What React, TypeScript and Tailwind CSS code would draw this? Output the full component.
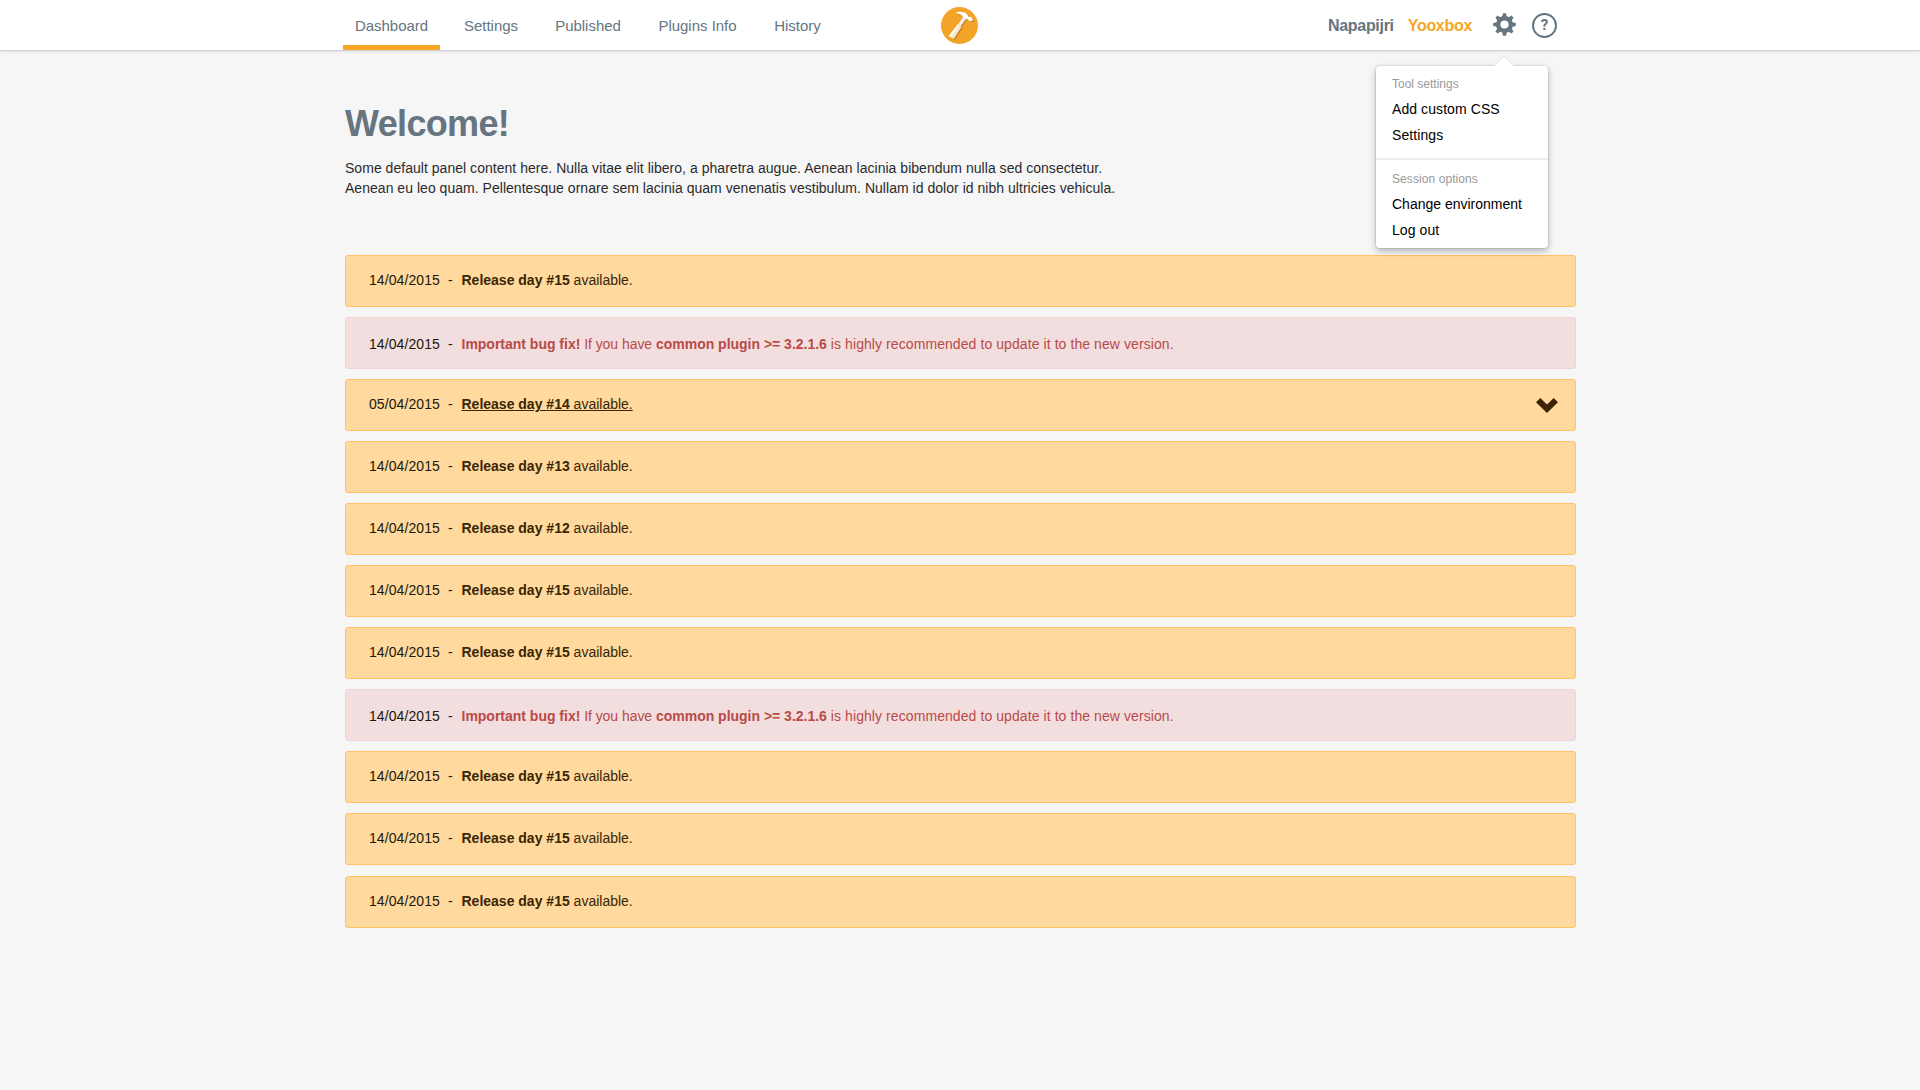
const tabs = [
  { label: 'Dashboard', width: 'w-[97px]' },
  { label: 'Settings', width: 'w-[78px]' },
  { label: 'Published', width: 'w-[92px]' },
  { label: 'Plugins Info', width: 'w-[103px]' },
  { label: 'History', width: 'w-[73px]' },
];

type Notice = { date: string; release?: number; open?: boolean };

const notices: Notice[] = [
  { date: '14/04/2015', release: 15 },
  { date: '14/04/2015' },
  { date: '05/04/2015', release: 14, open: true },
  { date: '14/04/2015', release: 13 },
  { date: '14/04/2015', release: 12 },
  { date: '14/04/2015', release: 15 },
  { date: '14/04/2015', release: 15 },
  { date: '14/04/2015' },
  { date: '14/04/2015', release: 15 },
  { date: '14/04/2015', release: 15 },
  { date: '14/04/2015', release: 15 },
];

function Logo() {
  return (
    <svg width="37" height="37" viewBox="0 0 37 37" aria-hidden="true">
      <circle cx="18.5" cy="18.5" r="18.5" fill="#f3a328" />
      <g transform="translate(1 1)" fill="#8f5c10" opacity="0.5">
        <path d="M22.4 9.5 25.4 11.5 19.5 19.3 17 17.6z" />
        <path d="M16.8 17.2 20.6 19.8 12.6 32.2 7.8 29z" />
        <path d="M14.4 6.2C18 4.2 23 4.2 26 7.2L28 10.2 29.8 9.4 32.2 13 29 14.6 27 12.4 22.6 10.8C21 7.6 18.4 6.4 14.4 6.2Z" />
      </g>
      <path d="M22.4 9.5 25.4 11.5 19.5 19.3 17 17.6z" fill="#f6f2ea" />
      <path d="M14.4 6.2C18 4.2 23 4.2 26 7.2L28 10.2 29.8 9.4 32.2 13 29 14.6 27 12.4 22.6 10.8C21 7.6 18.4 6.4 14.4 6.2Z" fill="#ffffff" />
      <path d="M16.8 17.2 20.6 19.8 12.6 32.2 7.8 29z" fill="#f6e6cb" />
      <path d="M16.8 17.2 18.2 18.2 9.6 30.2 7.8 29z" fill="#fffaf0" />
    </svg>
  );
}

function Gear() {
  return (
    <svg width="23" height="23" viewBox="-11.5 -11.5 23 23" fill="#667580" aria-hidden="true">
      <path
        fillRule="evenodd"
        d="M0-8.5A8.5 8.5 0 0 1 0 8.5 8.5 8.5 0 0 1 0-8.5ZM0-4.1A4.1 4.1 0 0 0 0 4.1 4.1 4.1 0 0 0 0-4.1Z"
      />
      {[0, 45, 90, 135, 180, 225, 270, 315].map((angle) => (
        <path key={angle} d="M-2.3-7.4-1.5-11.3H1.5L2.3-7.4Z" transform={`rotate(${angle})`} />
      ))}
    </svg>
  );
}

function Header() {
  return (
    <header className="relative flex h-[51px] border-b border-[#d3d3d3] bg-white pl-[343px] shadow-[0_1px_2px_rgba(0,0,0,0.1)]">
      <nav className="flex h-[50px] gap-3 text-[15px] text-[#667580]">
        {tabs.map((tab, i) => (
          <a
            key={tab.label}
            className={`flex justify-center border-b-[5px] pt-[15px] leading-[22px] tracking-[-0.02px] whitespace-nowrap ${tab.width} ${i === 0 ? 'border-[#f6a623]' : 'border-transparent'}`}
          >
            {tab.label}
          </a>
        ))}
      </nav>
      <div className="ml-[107px] pt-[7px]">
        <Logo />
      </div>
      <div className="ml-auto flex h-[50px] pr-[363px] text-[16px] leading-[22px] font-bold">
        <span className="mr-[14px] pt-[15px] tracking-[-0.3px] text-[#667580]">Napapijri</span>
        <span className="mr-[21px] pt-[15px] tracking-[-0.3px] text-[#f6a623]">Yooxbox</span>
        <span className="mr-[16px] pt-[13px]">
          <Gear />
        </span>
        <span className="mt-[13px] flex size-[25px] items-center justify-center rounded-full border-2 border-[#667580] pb-px font-['Roboto',sans-serif] text-[15px] text-[#667580]">
          ?
        </span>
      </div>
      <SettingsMenu />
    </header>
  );
}

function SettingsMenu() {
  return (
    <div className="absolute top-[66px] left-[1376px] z-10 h-[182px] w-[172px] rounded-[4px] bg-white text-[14px] leading-[26px] text-black shadow-[0_0_0_1px_rgba(0,0,0,0.07),0_3px_7px_rgba(0,0,0,0.28)]">
      <svg className="absolute -top-[11px] left-[117px]" width="22" height="12" viewBox="0 0 22 12" aria-hidden="true">
        <path d="M0 12 11 .8 22 12Z" fill="#ffffff" />
        <path d="M1 10.5 11 .5 21 10.5" fill="none" stroke="#dedede" strokeWidth="1" />
      </svg>
      <div className="flex h-[92px] flex-col px-4 pt-[6px]">
        <span className="mb-[-1px] text-[12px] leading-[25px] text-[#999999]">Tool settings</span>
        <span className="tracking-[0.08px]">Add custom CSS</span>
        <span className="tracking-[0.08px]">Settings</span>
      </div>
      <div className="flex flex-col border-t-2 border-[#ececec] px-4 pt-[7px]">
        <span className="mb-[-1px] text-[12px] leading-[25px] tracking-[0.08px] text-[#999999]">Session options</span>
        <span>Change environment</span>
        <span className="tracking-[0.08px]">Log out</span>
      </div>
    </div>
  );
}

function NoticeRow({ notice, last }: { notice: Notice; last: boolean }) {
  const bug = notice.release === undefined;
  return (
    <li
      className={`flex h-[52px] rounded-[3px] border pl-[23px] leading-[20px] ${last ? 'mt-[11px]' : 'mt-[10px]'} ${
        bug ? 'border-[#eed3d7] bg-[#f2dede] pt-[16px] text-[#b94a48]' : 'border-[#fdc466] bg-[#ffd99e] pt-[14px] text-[#3b2504]'
      }`}
    >
      <span className="w-[79px] tracking-[0.08px] text-[#201808]">{notice.date}</span>
      <span className="w-[13.5px] text-[#201808]">-</span>
      {bug ? (
        <p>
          <b className="tracking-[-0.01px]">Important bug fix!</b>
          <span className="tracking-[-0.05px]"> If you have </span>
          <b className="tracking-[-0.01px]">common plugin &gt;= 3.2.1.6</b>
          <span className="tracking-[0.08px]"> is highly recommended to update it to the new version.</span>
        </p>
      ) : (
        <p className={notice.open ? 'underline' : ''}>
          <b>Release day #{notice.release}</b> available.
        </p>
      )}
      {notice.open && (
        <svg className="mt-[4px] mr-[17px] ml-auto" width="22" height="15" viewBox="0 0 22 15" aria-hidden="true">
          <path d="M0 4.3 4.3 0 11 6.6 17.7 0 22 4.3 11 15Z" fill="#3b2504" />
        </svg>
      )}
    </li>
  );
}

export default function App() {
  return (
    <div className="h-[1090px] w-[1920px] overflow-hidden bg-[#f6f6f6] font-['Liberation_Sans',Arial,sans-serif] text-[14px]">
      <Header />
      <main className="ml-[345px] w-[1231px]">
        <h1 className="pt-[51px] text-[36px] leading-[44px] font-bold tracking-[-0.65px] text-[#667580]">Welcome!</h1>
        <div className="mt-[12px] h-[87px] leading-[20px] tracking-[0.03px] whitespace-nowrap text-[#2b2b2b]">
          <p>Some default panel content here. Nulla vitae elit libero, a pharetra augue. Aenean lacinia bibendum nulla sed consectetur.</p>
          <p>Aenean eu leo quam. Pellentesque ornare sem lacinia quam venenatis vestibulum. Nullam id dolor id nibh ultricies vehicula.</p>
        </div>
        <ul className="flex flex-col">
          {notices.map((notice, i) => (
            <NoticeRow key={i} notice={notice} last={i === notices.length - 1} />
          ))}
        </ul>
      </main>
    </div>
  );
}
